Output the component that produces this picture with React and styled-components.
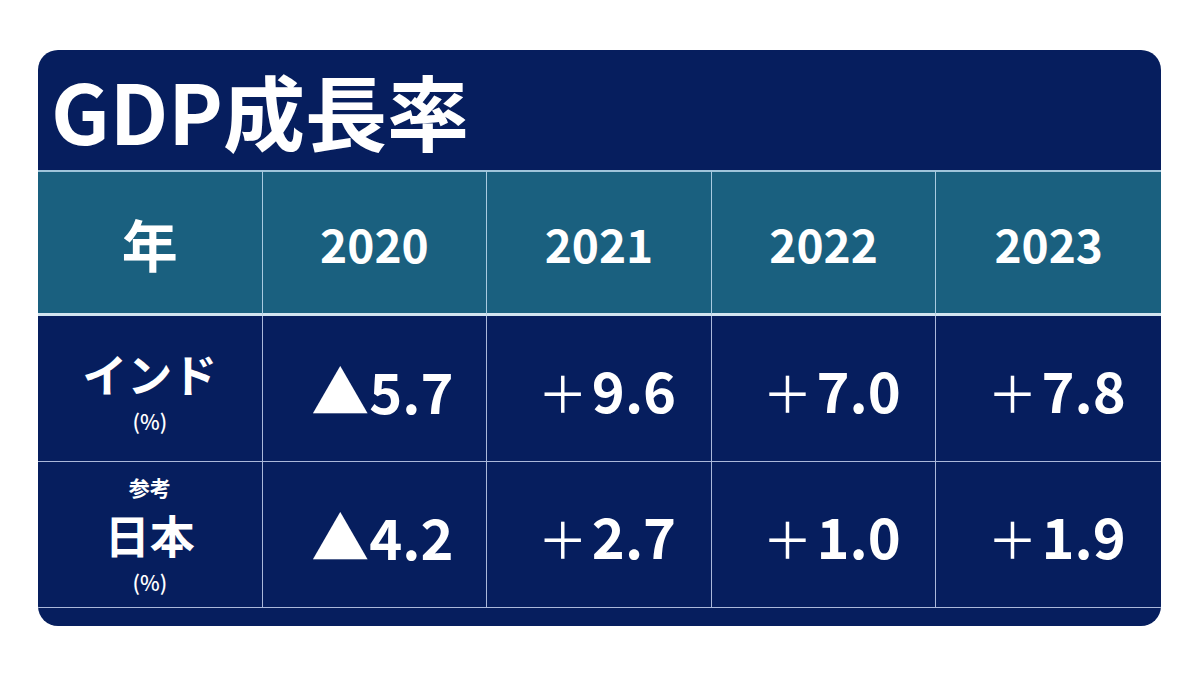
import styled, { createGlobalStyle } from 'styled-components';

const GlobalStyle = createGlobalStyle`
  body {
    margin: 0;
    background: #ffffff;
    font-family: "Noto Sans CJK JP", "Noto Sans", sans-serif;
  }
`;

const Page = styled.div`
  width: 1200px;
  height: 675px;
  padding: 50px 39px 0 38px;
  box-sizing: border-box;
`;

const Card = styled.div`
  background: #061e5e;
  border-radius: 20px;
  overflow: hidden;
  padding-bottom: 18px;
`;

const Title = styled.h1`
  margin: 0;
  height: 120px;
  display: flex;
  align-items: center;
  padding-left: 13px;
  color: #ffffff;
  font-size: 82px;
  font-weight: 700;
  line-height: 1;
`;

const Grid = styled.div`
  display: grid;
  grid-template-columns: repeat(5, 1fr);
`;

const HeadCell = styled.div`
  height: 141px;
  background: #1a607f;
  border-top: 2px solid #9fc4da;
  border-bottom: 3px solid #d3e4ef;
  border-right: ${p => (p.$last ? 'none' : '1.5px solid #a9cbe0')};
  display: flex;
  align-items: center;
  justify-content: center;
  color: #ffffff;
  font-weight: 700;
  font-size: ${p => (p.$big ? '56px' : '46px')};
  line-height: 1;
`;

const Cell = styled.div`
  height: 145px;
  border-bottom: 1.5px solid #aab8da;
  border-right: ${p => (p.$last ? 'none' : '1.5px solid #aab8da')};
  display: flex;
  flex-direction: column;
  align-items: center;
  justify-content: center;
  color: #ffffff;
`;

const Note = styled.div`
  font-size: 21px;
  font-weight: ${p => (p.$bold ? 700 : 500)};
  line-height: normal;
`;

const Label = styled.div`
  font-size: 45px;
  font-weight: 700;
  line-height: normal;
`;

const Value = styled.div`
  display: flex;
  align-items: baseline;
  padding-left: 16px;
  font-size: 56px;
  font-weight: 700;
  line-height: 1;
`;

const Sign = styled.span`
  font-size: ${p => (p.$tri ? '58px' : '50px')};
  font-weight: ${p => (p.$tri ? 700 : 400)};
  margin-right: ${p => (p.$tri ? '0px' : '4px')};
`;

const years = ['2020', '2021', '2022', '2023'];

const rows = [
  { note: null, label: 'インド', values: [['▲', '5.7'], ['＋', '9.6'], ['＋', '7.0'], ['＋', '7.8']] },
  { note: '参考', label: '日本', values: [['▲', '4.2'], ['＋', '2.7'], ['＋', '1.0'], ['＋', '1.9']] },
];

const App = () => (
  <>
    <GlobalStyle />
    <Page>
      <Card>
        <Title>GDP成長率</Title>
        <Grid>
          <HeadCell $big>年</HeadCell>
          {years.map((y, i) => (
            <HeadCell key={y} $last={i === years.length - 1}>{y}</HeadCell>
          ))}
          {rows.map(row => (
            <>
              <Cell key={row.label}>
                {row.note && <Note $bold>{row.note}</Note>}
                <Label>{row.label}</Label>
                <Note>(%)</Note>
              </Cell>
              {row.values.map(([sign, num], i) => (
                <Cell key={row.label + i} $last={i === row.values.length - 1}>
                  <Value>
                    <Sign $tri={sign === '▲'}>{sign}</Sign>
                    {num}
                  </Value>
                </Cell>
              ))}
            </>
          ))}
        </Grid>
      </Card>
    </Page>
  </>
);

export default App;
